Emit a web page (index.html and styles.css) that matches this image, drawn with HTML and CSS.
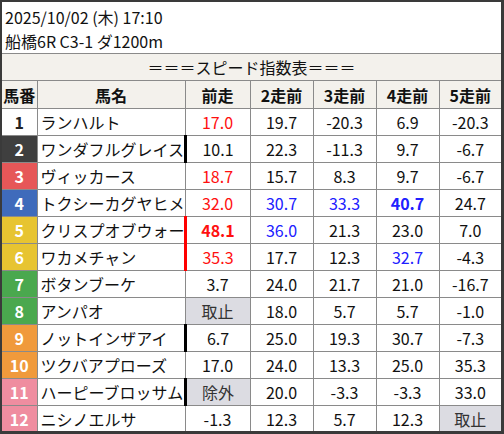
FILE: index.html
```html
<!DOCTYPE html>
<html lang="ja">
<head>
<meta charset="utf-8">
<link rel="stylesheet" href="styles.css">
</head>
<body>
<div class="frame">
  <div class="info">
    <div class="line">2025/10/02 (木) 17:10</div>
    <div class="line">船橋6R C3-1 ダ1200m</div>
  </div>
  <table class="sheet">
    <colgroup>
      <col class="c-no"><col class="c-name"><col class="c-prev"><col class="c-n"><col class="c-n"><col class="c-n"><col class="c-last">
    </colgroup>
    <tr class="title-row"><td colspan="7">＝＝＝スピード指数表＝＝＝</td></tr>
    <tr class="head-row">
      <th>馬番</th><th>馬名</th><th>前走</th><th>2走前</th><th>3走前</th><th>4走前</th><th>5走前</th>
    </tr>
    <tr>
      <td class="no w1">1</td><td class="name">ランハルト</td><td class="red">17.0</td><td>19.7</td><td>-20.3</td><td>6.9</td><td>-20.3</td>
    </tr>
    <tr>
      <td class="no w2">2</td><td class="name">ワンダフルグレイス</td><td class="mark-black">10.1</td><td>22.3</td><td>-11.3</td><td>9.7</td><td>-6.7</td>
    </tr>
    <tr>
      <td class="no w3">3</td><td class="name">ヴィッカース</td><td class="red">18.7</td><td>15.7</td><td>8.3</td><td>9.7</td><td>-6.7</td>
    </tr>
    <tr>
      <td class="no w4">4</td><td class="name">トクシーカグヤヒメ</td><td class="red">32.0</td><td class="blue">30.7</td><td class="blue">33.3</td><td class="blue strong">40.7</td><td>24.7</td>
    </tr>
    <tr>
      <td class="no w5">5</td><td class="name">クリスプオブウォー</td><td class="red strong mark-red">48.1</td><td class="blue">36.0</td><td>21.3</td><td>23.0</td><td>7.0</td>
    </tr>
    <tr>
      <td class="no w5">6</td><td class="name">ワカメチャン</td><td class="red mark-red">35.3</td><td>17.7</td><td>12.3</td><td class="blue">32.7</td><td>-4.3</td>
    </tr>
    <tr>
      <td class="no w7">7</td><td class="name">ボタンブーケ</td><td>3.7</td><td>24.0</td><td>21.7</td><td>21.0</td><td>-16.7</td>
    </tr>
    <tr>
      <td class="no w7">8</td><td class="name">アンパオ</td><td class="off">取止</td><td>18.0</td><td>5.7</td><td>5.7</td><td>-1.0</td>
    </tr>
    <tr>
      <td class="no w9">9</td><td class="name">ノットインザアイ</td><td class="mark-black">6.7</td><td>25.0</td><td>19.3</td><td>30.7</td><td>-7.3</td>
    </tr>
    <tr>
      <td class="no w9">10</td><td class="name">ツクバアプローズ</td><td>17.0</td><td>24.0</td><td>13.3</td><td>25.0</td><td>35.3</td>
    </tr>
    <tr>
      <td class="no w11">11</td><td class="name">ハーピーブロッサム</td><td class="off mark-black">除外</td><td>20.0</td><td>-3.3</td><td>-3.3</td><td>33.0</td>
    </tr>
    <tr>
      <td class="no w11">12</td><td class="name">ニシノエルサ</td><td>-1.3</td><td>12.3</td><td>5.7</td><td>12.3</td><td class="off">取止</td>
    </tr>
  </table>
</div>
</body>
</html>
```
FILE: styles.css
```css
html, body {
  margin: 0;
  padding: 0;
  background: #ffffff;
}
body {
  font-family: "Noto Sans CJK JP", "Noto Sans", sans-serif;
  font-size: 16px;
  color: #111111;
}
.frame {
  width: 504px;
  height: 434px;
  box-sizing: border-box;
  border-style: solid;
  border-color: #3a3a3a;
  border-width: 2px 3px 3px 2px;
  background: #ffffff;
  overflow: hidden;
}
.info {
  padding: 3px 0 0 3px;
  height: 52px;
  box-sizing: border-box;
  border-bottom: 1px solid #8a8a8a;
}
.line {
  line-height: 24px;
  height: 24px;
}
.sheet {
  border-collapse: collapse;
  table-layout: fixed;
  width: 499px;
}
.c-no { width: 35px; }
.c-name { width: 148px; }
.c-prev { width: 65px; }
.c-n { width: 63px; }
.c-last { width: 62px; }
.sheet td, .sheet th {
  border: 1px solid #8a8a8a;
  height: 26px;
  padding: 0;
  text-align: center;
  line-height: 20px;
  white-space: nowrap;
  overflow: hidden;
}
.sheet tr:first-child td { border-top: none; }
.sheet tr td:first-child, .sheet tr th:first-child { border-left: none; }
.sheet tr td:last-child, .sheet tr th:last-child { border-right: none; }
.title-row td {
  background: #f3f1ec;
  height: 26px;
}
.head-row th {
  background: #f3f1ec;
  font-weight: bold;
  height: 27px;
}
.sheet td.name {
  text-align: left;
  padding-left: 3px;
}
.no {
  font-weight: bold;
  color: #ffffff;
}
.w1 { background: #ffffff; color: #222222; }
.w2 { background: #3f3f3f; }
.w3 { background: #e65758; }
.w4 { background: #3f6bbb; }
.w5 { background: #e7c431; }
.w7 { background: #4aa84e; }
.w9 { background: #f09a3c; }
.w11 { background: #ef8da0; }
.red { color: #ff1010; }
.blue { color: #2020ff; }
.strong { font-weight: bold; }
.off { background: #dcdce2; color: #333333; }
.sheet td.mark-black { border-left: 3px solid #000000; }
.sheet td.mark-red { border-left: 3px solid #ff0000; }
```
